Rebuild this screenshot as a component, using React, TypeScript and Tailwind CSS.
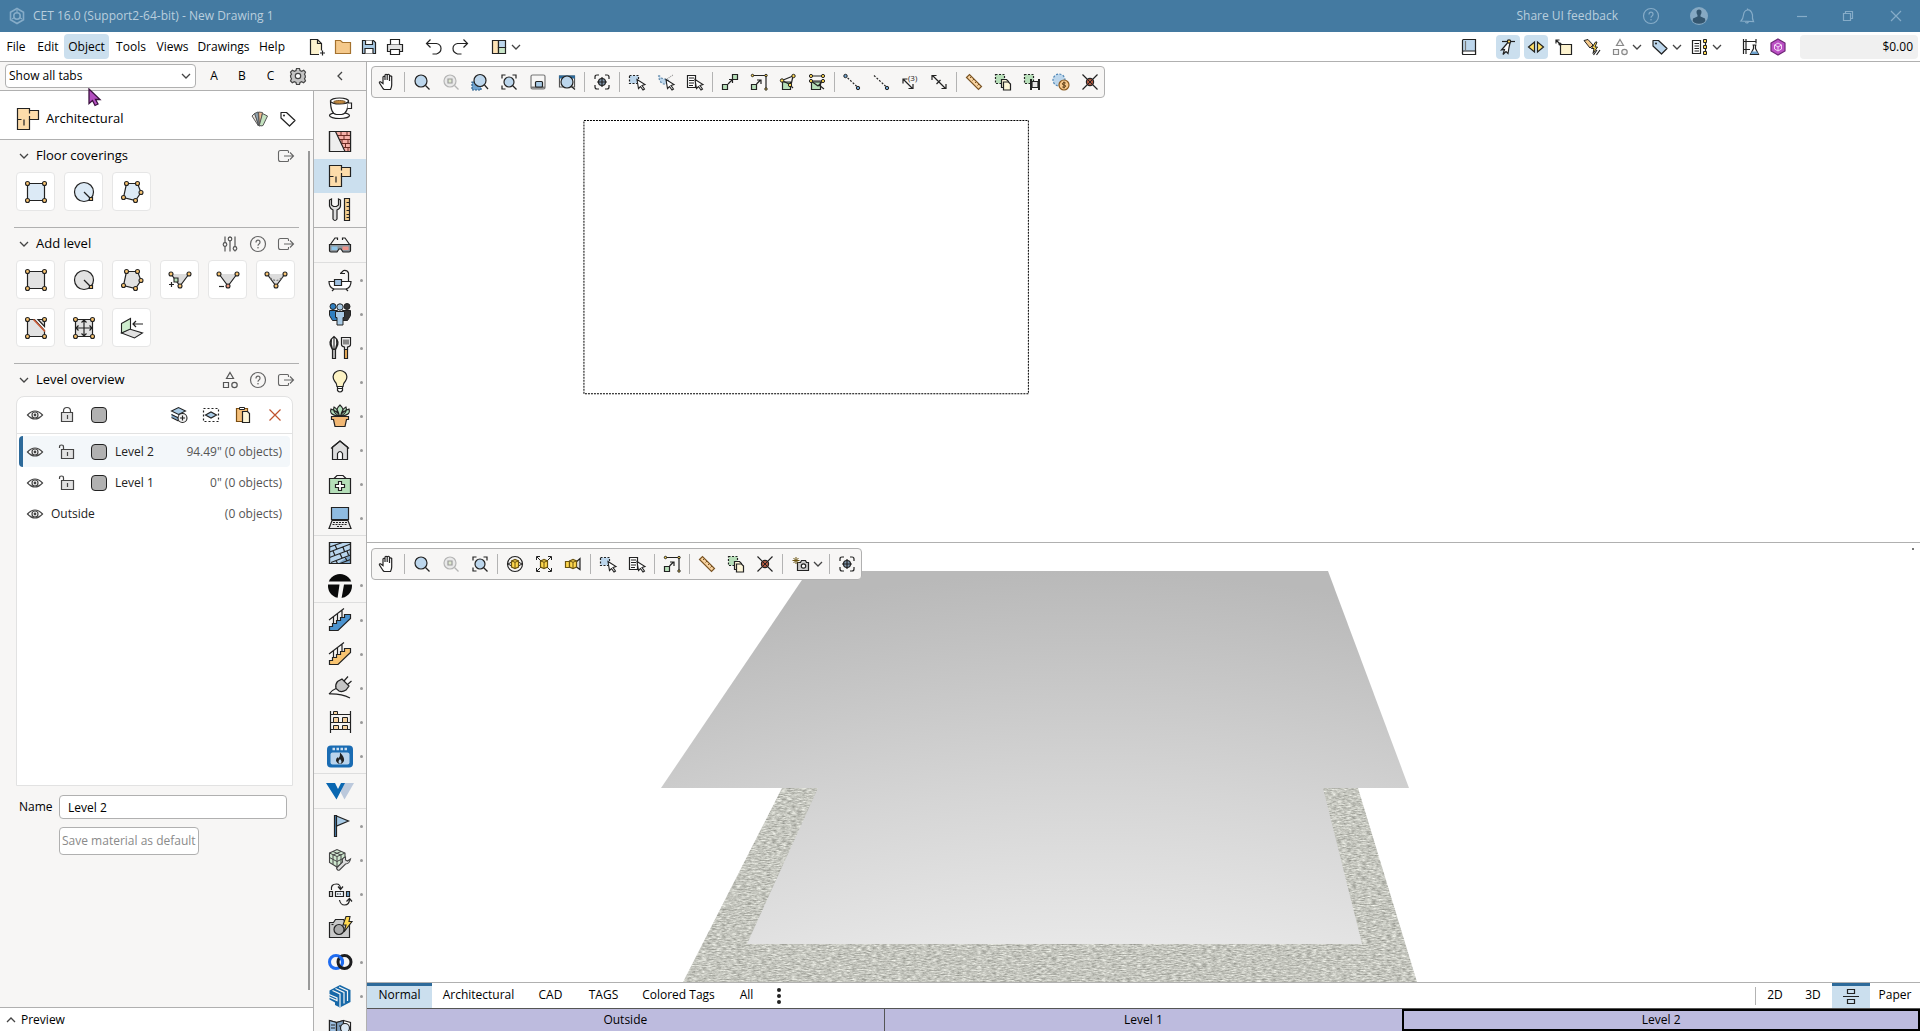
import React from "react";

type Draw = { s?: number; children: React.ReactNode; className?: string };

const Svg = ({ s = 24, children, className = "" }: Draw) => (
  <svg width={s} height={s} viewBox={`0 0 ${s} ${s}`} fill="none" stroke="#222" strokeWidth="1.2" className={`shrink-0 ${className}`} aria-hidden="true">
    {children}
  </svg>
);

const Chevron = ({ d = "down", color = "#444" }: { d?: "down" | "up" | "left"; color?: string }) => (
  <svg width="10" height="10" viewBox="0 0 10 10" fill="none" stroke={color} strokeWidth="1.3" className="shrink-0" aria-hidden="true">
    <path d={d === "down" ? "M1 3l4 4 4-4" : d === "up" ? "M1 7l4-4 4 4" : "M7 1L3 5l4 4"} />
  </svg>
);

/* ---------- small icons, 24 x 24 ---------- */

const NewFile = () => (
  <Svg><path d="M5.5 4.5h7l4 4v11h-11z" fill="#fdf3cf" /><path d="M12.5 4.5v4h4" /><path d="M14 15.500h6v6h-6z" fill="#fff" stroke="none" /><path d="M17.5 15.5v5M15 18h5" /></Svg>
);
const Folder = () => <Svg><path d="M4.5 18.5v-13h5l2 2h8v11z" fill="#f5c98b" stroke="#a5722e" /></Svg>;
const Save = () => (
  <Svg><path d="M5.5 5.5h11l2 2v11h-13z" fill="#a9cbe6" /><path d="M8.5 5.5v4h7v-4M8 18.5v-5h8v5" fill="#fff" /></Svg>
);
const Printer = () => (
  <Svg><path d="M4.5 9.500h15v7h-15z" fill="#e3e3e3" /><path d="M7.5 9.500v-5h9v5M7.5 14.500h9v5h-9z" fill="#fff" /></Svg>
);
const Undo = () => <Svg><path d="M8.5 4.500L4.500 8.500l4 4M4.500 8.500h10q4.500 1 4.500 5t-4.500 5.500h-4" /></Svg>;
const Redo = () => <Svg><path d="M15.5 4.500l4 4-4 4M19.500 8.500h-10q-4.500 1-4.500 5t4.500 5.500h4" /></Svg>;
const LayoutIcon = () => (
  <Svg><path d="M5.5 5.5h6v13h-6z" fill="#fde2b5" /><path d="M11.5 5.5h7v7h-7z" fill="#bcd6ec" /><path d="M11.5 12.5h7v6h-7z" fill="#c9e6c9" /></Svg>
);
const Book = () => (
  <Svg><path d="M5.5 5.500q0-1 1-1h12v15h-12q-1 0-1-1z" fill="#bcd6ec" /><path d="M5.5 17q0-1 1-1h12v3.500h-12q-1 0-1-1z" fill="#fff" /><path d="M8.5 6v10" stroke="#777" /></Svg>
);
const SnapPlane = () => (
  <Svg><path d="M6 6.500h13" /><path d="M11.500 8l-6 7 3-.5-1.500 5 3-3 2 2 1-6 1-4.500" fill="#fff" /><circle cx="13" cy="6.500" r="1.700" fill="#ffd95e" /></Svg>
);
const Mirror = () => (
  <Svg><path d="M10.500 7v10L4.500 12zM13.500 7v10l6-5z" fill="#ffe068" /></Svg>
);
const CornerBox = () => (
  <Svg><path d="M8.500 9.500h11v10h-11z" fill="#fdf3cf" /><path d="M8 9L4 5M4 8.500V5h3.500" /><circle cx="8" cy="9" r="1" fill="#222" /></Svg>
);
const QuickTag = () => (
  <Svg><path d="M4 5.500l4-1 5 5.500-3 3z" fill="#f5c98b" strokeWidth="1" /><path d="M15.500 7l-4 6.500h2.500l-1 5 4.500-6.500H15l2-5z" fill="#ffd84f" strokeWidth="1" /><path d="M17 15l-3.500 5M20 15l-3.500 5" /></Svg>
);
const Shapes = ({ c = "#555" }: { c?: string }) => (
  <Svg><g stroke={c} fill="#f4f4f4"><path d="M12 4.500l3.500 6h-7zM5.500 14.500h5v5h-5z" /><circle cx="16.500" cy="17" r="2.700" /></g></Svg>
);
const Tag = ({ fill = "#bcd6ec" }: { fill?: string }) => (
  <Svg><path d="M5 5.500h5.500l8.500 8-5.500 5.500L5 11z" fill={fill} strokeLinejoin="round" /><circle cx="8" cy="8.500" r="1" fill="#222" stroke="none" /></Svg>
);
const ListTree = () => (
  <Svg><path d="M4.500 5.500h8v13h-8z" fill="#fff" /><path d="M6.500 8.500h4.500M6.500 11h4.500M6.500 13.500h4.500M6.500 16h4.500M17.500 6v13" /><g fill="#ffd84f" strokeWidth="1"><path d="M15.500 4.500h3v3h-3zM15.500 10.500h3v3h-3zM15.500 16.500h3v3h-3z" /></g></Svg>
);
const Lab = () => (
  <Svg><path d="M5.500 4v15M8 6.500h10M8 14.500h4M8 4v15M18 4v4.500M5.500 6.500H8M5.500 14.500H8" /><path d="M14.500 10h4M15.500 10v3.500l-3 6h8l-3-6V10" fill="#fff" /><path d="M14 16.500h5l1.200 2.500h-7.400z" fill="#6fa3cf" stroke="none" /></Svg>
);
const PurpleHex = () => (
  <Svg><path d="M12 4l7 4v8l-7 4-7-4V8z" fill="#bb4fc4" stroke="#6d2676" /><path d="M12 8l3.500 2v4L12 16l-3.500-2v-4zM8.500 10l3.500 2 3.500-2M12 12v4" stroke="#f3d9f6" strokeWidth="1" /></Svg>
);
const Gear = () => (
  <Svg><path d="M10.500 4.500h3l.5 2 1.700.8 2-1 1.800 1.900-1 2 .8 1.600v1.600l-.8 1.400 1 2-1.900 1.900-2-1-1.600.8-.5 2h-3l-.5-2-1.700-.8-2 1-1.800-1.900 1-2-.8-1.600-.2-1.500 1-1.500-1-2 1.900-1.900 2 1 1.600-.8z" fill="#c4c4c4" stroke="#444" /><circle cx="12" cy="12" r="2.700" fill="#fff" stroke="#444" /></Svg>
);
const Palette = () => (
  <Svg>
    <path d="M10.500 19L4 9l3-3z" fill="#e8e2da" stroke="#555" strokeWidth="1" /><path d="M11 19L6.500 6.500l3.500-1.500 1.500 14z" fill="#8fa3b0" stroke="#555" strokeWidth="1" />
    <path d="M11.500 19L10.500 5l4 .5-2.500 13.500z" fill="#f1b98d" stroke="#555" strokeWidth="1" /><path d="M11.500 17.500L14.500 6.500l5 2.500-4.500 9.500q-3 1.500-3.500-1z" fill="#c4e3c0" stroke="#555" strokeWidth="1" />
  </Svg>
);
const Export = () => (
  <Svg><path d="M14.500 9V7.500q0-1-1-1h-7q-2 0-2 2v7q0 2 2 2h7q1 0 1-1V15M10 12h9.500M16 8.500l3.500 3.500-3.500 3.500" stroke="#666" strokeWidth="1.100" /></Svg>
);
const HelpCircle = ({ c = "#666" }: { c?: string }) => (
  <Svg><circle cx="12" cy="12" r="7.500" stroke={c} /><path d="M10 10.500q0-2.300 2-2.300t2 2q0 1.100-1 1.700t-1 1.800" stroke={c} /><circle cx="12" cy="15.800" r=".8" fill={c} stroke="none" /></Svg>
);
const Sliders = () => (
  <Svg><g stroke="#555"><path d="M7 4.500v15M12 4.500v15M17 4.500v15" /><g fill="#f7f6f5"><circle cx="7" cy="12.500" r="1.800" /><circle cx="12" cy="7" r="1.800" /><circle cx="17" cy="16.500" r="1.800" /></g></g></Svg>
);
const Eye = () => (
  <Svg><path d="M4.500 12q7.500-8 15 0-7.500 8-15 0z" fill="#fff" stroke="#444" /><circle cx="12" cy="12" r="3" stroke="#444" /><circle cx="12" cy="12" r="1.400" fill="#444" stroke="none" /></Svg>
);
const Lock = ({ open = false }: { open?: boolean }) => (
  <Svg>
    <path d={open ? "M8.500 9.500V7q0-2-2-2t-2 2v1" : "M8.500 9.500V8q0-3.500 3.500-3.500T15.500 8v1.500"} stroke="#444" />
    <path d={open ? "M6.500 9.500h12v9h-12z" : "M6.500 9.500h11v9h-11z"} fill="#e2e2e2" stroke="#444" /><path d="M12.500 12v4" stroke="#444" />
  </Svg>
);
const Swatch = () => <span className="size-4 shrink-0 rounded-[4px] border border-[#222] bg-[#b1b1b1]" />;
const LayersAdd = () => (
  <Svg><path d="M4.500 8l7-3.500 7 3.500-7 3.500z" fill="#a9cbe6" strokeWidth="1.100" /><path d="M4.500 11l7 3.500v3l-7-3.500z" fill="#7fa8cc" stroke="none" /><path d="M4.500 11.500l7 3.500 4-2M4.500 14.500l7 3.500" strokeWidth="1.100" /><circle cx="15.500" cy="15" r="4.500" fill="#f2f2f2" strokeWidth="1.100" /><path d="M15.500 12.500v5M13 15h5" /></Svg>
);
const IsolateLayer = () => (
  <Svg><path d="M4.500 5.500h15v13h-15z" strokeDasharray="2 2" /><path d="M6.500 12l5.500-3 5.500 3-5.500 3z" fill="#a9cbe6" /></Svg>
);
const Paste = () => (
  <Svg><path d="M5.500 5.500h11v13h-11z" fill="#f5c07a" stroke="#7a4d12" /><path d="M8.500 4.500h5v2h-5z" fill="#fff" strokeWidth="1" /><path d="M11.500 8.500h5l2 2v9h-7z" fill="#fdf6d8" /></Svg>
);
const RedX = () => <Svg><path d="M6.500 6.500l11 11M17.500 6.500l-11 11" stroke="#c0532f" /></Svg>;

const Hand = () => (
  <Svg><path d="M8 18.500L4.500 13q-.5-1.500 1-1.200L8 13.500V7q.8-1.500 2 0v3-5q1-1.500 2.200 0v5V5q1.100-1.500 2.300 0v6-4.500q1.100-1.200 2.200 0V15q0 2-1.200 4.500H9z" fill="#fff" /></Svg>
);
const Lens = () => <Svg><circle cx="11" cy="11" r="6" fill="#bcd6ec" /><path d="M15.500 15.500l4 4" /></Svg>;
const LensDim = () => (
  <Svg><g stroke="#b5b5b5"><circle cx="11" cy="11" r="6" fill="#e9e9e9" /><path d="M15.500 15.500l4 4" /><path d="M9 9h4v4H9z" fill="#dfe9cf" stroke="#9c9c9c" /></g></Svg>
);
const LensWindow = () => (
  <Svg><path d="M4 12h9v8H4z" fill="#6fa3cf" stroke="#2d5f8a" strokeDasharray="2 1" /><circle cx="12" cy="10.500" r="6" fill="#bcd6ec" /><path d="M16.500 15l3.500 4" /></Svg>
);
const LensExtents = () => (
  <Svg><path d="M5 8.500V5h3.500M15.500 5H19v3.500M5 15.500V19h3.500" /><circle cx="12" cy="12" r="5" fill="#bcd6ec" /><path d="M15.500 15.500l4 4" /></Svg>
);
const MiniWindow = () => (
  <Svg><rect x="5" y="5" width="14" height="14" rx="1.500" stroke="#777" /><path d="M5 17.500h14" stroke="#777" strokeWidth="2" /><rect x="9.500" y="11.500" width="7" height="5.500" rx="1" fill="#a9cbe6" /></Svg>
);
const LensScreen = () => (
  <Svg><path d="M4.500 6h15v11h-15z" fill="#fff" stroke="#555" /><path d="M4 5.500h16v3H4z" fill="#2d6a9a" stroke="none" /><circle cx="12" cy="12" r="6" fill="#bcd6ec" /><path d="M16.500 16.500l3.500 3" /></Svg>
);
const Target = () => (
  <Svg><path d="M5 9V7q0-2 2-2h2M15 5h2q2 0 2 2v2M19 15v2q0 2-2 2h-2M9 19H7q-2 0-2-2v-2" /><circle cx="12" cy="12" r="3.500" fill="#7f96ad" /><path d="M12 7v10M7 12h10" /></Svg>
);
const Pointer = () => <path d="M12 9.500l8 5-3 1 2.500 3.500-1.500 1-2.500-3.500-2 2z" fill="#fff" strokeWidth="1.100" />;
const SelectRect = () => <Svg><path d="M4.500 5.500h9v8h-9z" fill="#bcd6ec" strokeDasharray="2 1.500" /><Pointer /></Svg>;
const SelectLasso = () => <Svg><path d="M4.500 6q1-1 2.500 2l7 2q2 3-2 4-6 1-7.500-8z" fill="#bcd6ec" stroke="#5f87a8" strokeDasharray="2 1.500" /><path d="M13 9l6-4" stroke="#999" strokeDasharray="1 1" /><Pointer /></Svg>;
const SelectList = () => <Svg><path d="M4.500 5.500h8v12h-8z" fill="#fff" /><path d="M6 8h5M6 10.500h5M6 13h5M6 15.500h4" /><Pointer /></Svg>;
const LinkSquares = () => (
  <Svg><g fill="#b7dfb9"><path d="M14.500 4.500h5v5h-5zM4.500 14.500h5v5h-5z" /></g><path d="M10 14l4.500-4.500M11 9.500h3.500V13" /></Svg>
);
const ScaleBox = () => (
  <Svg><path d="M4.500 14.500h5v5h-5z" fill="#b7dfb9" /><path d="M6 5.500h13v13M9.500 14l4-4M10 10h4v4" /><g fill="#ffd84f" strokeWidth="1"><circle cx="5.500" cy="5.500" r="1.200" /><circle cx="19" cy="5.500" r="1.200" /><circle cx="19" cy="19" r="1.200" /></g></Svg>
);
const VertexA = () => (
  <Svg><path d="M6.500 12h8v7.500h-8z" fill="#b7dfb9" /><path d="M6 10.500l11-4.500M6 10.500l8 4M17 6l-2 9M17 18l-3-3" /><g fill="#ffd84f" strokeWidth="1"><circle cx="6" cy="10.500" r="1.700" /><circle cx="17.500" cy="6" r="1.700" /><circle cx="14" cy="15" r="1.700" /></g></Svg>
);
const VertexB = () => (
  <Svg><path d="M6.500 12h9v7.500h-9z" fill="#b7dfb9" /><path d="M6 6h12M6 11h12M6 11l7 5 5-5M14 15l5 4" /><g fill="#ffd84f" strokeWidth="1"><circle cx="6" cy="6" r="1.600" /><circle cx="18" cy="6" r="1.600" /><circle cx="6" cy="11" r="1.600" /><circle cx="18" cy="11" r="1.600" /></g></Svg>
);
const DotLine = ({ both = false }: { both?: boolean }) => (
  <Svg><path d="M5 5.500l13 12" strokeDasharray="2 1.500" /><g fill="#6fa3cf" strokeWidth="1">{both && <circle cx="5.500" cy="6" r="1.700" />}<circle cx="18" cy="18" r="1.700" /></g></Svg>
);
const DimensionN = () => (
  <Svg><path d="M5.500 9.500l9 9M5 13.500V9h4.500M15 14v4.500h-4.500" /><text x="10" y="11" fontSize="8" fill="#222" stroke="none" fontFamily="Open Sans, sans-serif">(3)</text></Svg>
);
const Dimension = () => <Svg><path d="M5.500 5.500l13 13M5 10V5.500h4.500M19 14v4.500h-4.500M13.500 10l-4 4" /></Svg>;
const Ruler = () => (
  <Svg><path d="M4.500 7.500l3-3 12 12-3 3z" fill="#f8d3a0" stroke="#7a5424" /><path d="M9.500 6.500L8 8M12 9l-1.500 1.500M14.500 11.500L13 13M17 14l-1.500 1.500" stroke="#7a5424" strokeWidth="1" /></Svg>
);
const CopyBox = () => (
  <Svg><path d="M4.500 4.500h9v9h-9z" fill="#b7dfb9" strokeDasharray="2 1.500" /><path d="M10.500 9.500h5l2 2v6h-7z" fill="#fdf6d8" /><path d="M12.500 12h5l2 2v6h-7z" fill="#fdf6d8" /></Svg>
);
const FilmBox = () => (
  <Svg><path d="M4.500 4.500h9v9h-9z" fill="#b7dfb9" strokeDasharray="2 1.500" /><path d="M11 9v11M19 9v11" strokeWidth="2" /><path d="M12 11.500h6v6h-6z" fill="#e5e5e5" /></Svg>
);
const CostIcon = () => (
  <Svg><circle cx="10" cy="10" r="6" fill="#bcd6ec" stroke="#4f86b5" strokeDasharray="2 1.500" /><circle cx="15" cy="15" r="5" fill="#f8c98c" stroke="#8a5a1f" /><path d="M16.700 13q-3.400-1-3.400.8 0 1 1.700 1.200t1.700 1.200q0 1.700-3.400.8M15 11.500v7" stroke="#5a3a12" strokeWidth="1" /></Svg>
);
const Explode = () => (
  <Svg><path d="M4.500 4.500l15 15M19.500 4.500l-15 15" /><circle cx="12" cy="12" r="3.600" fill="#b0573f" /><path d="M9.500 9.500l5 5M14.500 9.500l-5 5" strokeWidth="1" /></Svg>
);
const Cube = () => (
  <><path d="M8.500 9l3.500-1.500L15.500 9v6L12 16.500 8.500 15z" fill="#ffd84f" stroke="#6b5410" /><path d="M12 10v6.500M8.500 9l3.500 1.200L15.500 9" stroke="#6b5410" strokeWidth="1" /></>
);
const OrbitCube = () => <Svg><circle cx="12" cy="12" r="7.500" fill="#f7f6f5" /><path d="M5 12q7-5 14 0M5 12q7 5 14 0" strokeWidth="1" /><Cube /></Svg>;
const ExpandCube = () => <Svg><path d="M5 5l14 14M19 5L5 19M4.500 8V4.500H8M16 4.500h3.500V8M4.500 16v3.500H8M16 19.500h3.500V16" strokeWidth="1" /><Cube /></Svg>;
const CameraCube = () => <Svg><path d="M14 11l5-4.500v11L14 14" fill="#ddd" /><path d="M4.500 9.500h4v6h-4z" fill="#ffd84f" stroke="#6b5410" /><Cube /></Svg>;
const CameraFx = () => (
  <Svg><path d="M8.500 10.500h3l1-2h4l1 2h2v8h-11z" fill="#ccc" /><circle cx="14.500" cy="14" r="2.200" fill="#fff" /><path d="M7 5v7M3.500 8.500h7M4.500 6l5 5M9.500 6l-5 5" strokeWidth="1" stroke="#6b5410" /></Svg>
);
const SplitView = () => <Svg><path d="M4 12.500h16M8.500 5.500h7v4h-7zM8.500 15.500h7v4h-7z" /></Svg>;

/* ---------- 28 x 28 drawings: tiles and the rail ---------- */

const Node = ({ x, y, c = "#f8c471" }: { x: number; y: number; c?: string }) => <circle cx={x} cy={y} r="2" fill={c} strokeWidth="1.1" />;
const Corners = () => <><Node x={5.5} y={5.5} /><Node x={22.5} y={5.5} /><Node x={5.5} y={22.5} /><Node x={22.5} y={22.5} /></>;
const TileRect = ({ f = "#e2e2e2" }: { f?: string }) => (
  <Svg s={28}><path d="M5.500 5.500h17v17h-17z" fill={f} /><Corners /></Svg>
);
const TileCircle = ({ f = "#e2e2e2" }: { f?: string }) => (
  <Svg s={28}><circle cx="14" cy="14" r="9.500" fill={f} /><path d="M14 14l6 6" /><path d="M19.500 19.500h3v3h-3z" fill="#f8c471" /></Svg>
);
const TilePoly = ({ f = "#e2e2e2" }: { f?: string }) => (
  <Svg s={28}><path d="M8.500 5.500h11l3.500 9-5.500 8-12-3z" fill={f} /><Node x={8.5} y={5.5} /><Node x={19.5} y={5.5} /><Node x={23} y={14.5} /><Node x={17.5} y={22.5} /><Node x={5.5} y={19.5} /></Svg>
);
const TileV = ({ kind }: { kind: "add" | "remove" | "arc" }) => (
  <Svg s={28}>
    <path d="M5 8h18l-9 12z" fill="#dcdcdc" stroke="none" /><path d="M5 8l9 12 9-12" />
    {kind === "arc" && <path d="M6 9q8 11 16 0" stroke="#777" strokeDasharray="2 1.5" />}
    <Node x={5} y={8} /><Node x={23} y={8} /><Node x={14} y={20} c={kind === "remove" ? "#ef9a80" : undefined} />
    {kind === "add" && <><path d="M8 12h4v4H8z" fill="#b7dfb9" strokeWidth="1.1" /><path d="M5.500 16v5M3 18.500h5" /></>}
    {kind === "remove" && <path d="M5 20.500h5" />}
  </Svg>
);
const TileCut = () => (
  <Svg s={28}><path d="M5.500 5.500h7l10 11v6h-17z" fill="#e2e2e2" /><path d="M16 5.500h6.500v7z" fill="#ddd" /><path d="M11.500 5.500l11.500 12" stroke="#cc5b36" strokeWidth="1.6" /><Corners /></Svg>
);
const TileMove = () => (
  <Svg s={28}><path d="M5.500 5.500h17v17h-17z" fill="#e2e2e2" /><path d="M14 6v16M6 14h16M11.500 8.500L14 6l2.500 2.500M11.500 19.500L14 22l2.500-2.500M8.500 11.500L6 14l2.500 2.500M19.500 11.500L22 14l-2.500 2.500" /><Corners /></Svg>
);
const TileFold = () => (
  <Svg s={28}><path d="M3.500 19l8-4 13 4-8 5z" fill="#e2e2e2" strokeWidth="1.1" /><path d="M3.500 9.500l9-5v10.500l-9 4z" fill="#cdeccd" strokeWidth="1.1" /><path d="M15 10h10M18 7l-3 3 3 3" /></Svg>
);

const Coffee = () => (
  <Svg s={28}><ellipse cx="13.500" cy="21.500" rx="10" ry="3" fill="#fff" /><path d="M4.500 7q0 13 6 13.500h5Q22 20 22.500 7z" fill="#fff" /><path d="M22 9h3.500v5.500h-4" fill="#fff" /><ellipse cx="13.500" cy="7" rx="9" ry="3" fill="#fff" /><ellipse cx="13.500" cy="8" rx="6" ry="1.500" fill="#c58a3c" stroke="#7b5a30" strokeWidth="1" /></Svg>
);
const BrickWall = () => (
  <Svg s={28}><path d="M3.500 3.500h21v20h-21z" fill="#eee" /><path d="M9.500 3.500h15v20h-5.500z" fill="#f5b0a8" stroke="none" /><path d="M12 7.500h12.500M13.500 11.500h11M15.500 15.500h9M17.500 19.500h7M15 3.500v4M21 3.500v4M18 7.500v4M16 11.500v4M22 11.500v4M19.500 15.500v4M22 19.500v4" stroke="#6b2a22" strokeWidth="1" /><path d="M9.500 3.500l9.500 20M3.500 3.500h21v20h-21z" /></Svg>
);
const FloorPlan = () => (
  <Svg s={28}><path d="M3.500 3.500h12v2h9v9h-9v10h-12z" fill="#fddcaa" /><path d="M15.500 5.500v3M15.500 11v4M3.500 14.500h4M10 14.500v6" /></Svg>
);
const ToolsIcon = () => (
  <Svg s={28}><path d="M3.500 4v6q1 3 3.500 4v9q2 3 4 0v-9q3-1 3.500-4V4l-2-1v6l-2 1.500h-3L5.500 9V3z" fill="#ddd" /><path d="M18.500 2.500h5v22h-5z" fill="#f5cf8e" /><path d="M20.500 6.500h3M20.500 10.500h3M20.500 14.500h3M20.500 18.500h3M20.500 21.500h3" strokeWidth="1" /></Svg>
);
const Glasses = () => (
  <Svg s={28}><path d="M4 14l5-7h2.500v2M24 14l-5-7h-2.500v2" /><path d="M3.500 13.500h21v6q0 1.500-1.500 1.500h-6l-2-3h-2l-2 3H5q-1.500 0-1.500-1.500z" fill="#8e979e" /><path d="M5.500 15.500h6v3.500h-6z" fill="#8ec6ea" stroke="none" /><path d="M16.500 15.500h6v3.500h-6z" fill="#f0938a" stroke="none" /></Svg>
);
const Bath = () => (
  <Svg s={28}><path d="M3 15.500h22q0 6-5 7.500H8q-5-1.500-5-7.500z" fill="#fff" /><path d="M22.500 15V7q-1-3-5-2.500l-3 3M14 7.500h5M8 23l-2 2M20 23l2 2" /><path d="M8.500 13.500h7v6h-7z" fill="#9dbfe0" /></Svg>
);
const People = () => (
  <Svg s={28}><g strokeWidth="1"><circle cx="7" cy="6.500" r="3" fill="#2f7fc0" /><path d="M3.500 10.500h8v10h-5l-3-5z" fill="#2f7fc0" /><circle cx="21" cy="6.500" r="3" fill="#333" /><path d="M16.500 10.500h8v5l-3 5h-5z" fill="#333" /><circle cx="14" cy="7" r="3.200" fill="#a9cbe6" /><path d="M9.500 11.500h9v6h-1.500v7.500h-6v-7.500H9.500z" fill="#a9cbe6" /></g></Svg>
);
const Kitchen = () => (
  <Svg s={28}><path d="M8 2.500q-7 5-2 12.500h4q5-7.500-2-12.500zM8 3v12M5.500 5q-1 5 1 10M10.500 5q1 5-1 10" strokeWidth="1.1" /><path d="M6.500 15.500h3v9h-3z" fill="#bbb" /><path d="M15.500 3.500h9v7q0 2-3 2.500v2.500h-3V13q-3-.5-3-2.500z" fill="#eee" /><path d="M18 5.500v5M20 5.500v5M22 5.500v5" strokeWidth="1" /><path d="M18.500 15.500h3v9h-3z" fill="#f5b45c" /></Svg>
);
const Bulb = () => (
  <Svg s={28}><path d="M11 18.500q0-3-2.500-5.500-3-5 .5-8.500 5-4 10 0 3.500 3.500.5 8.500-2.500 2.500-2.500 5.500z" fill="#fdf3c4" /><path d="M11.500 18.500h5v4q-2.500 3-5 0zM11.500 20.500h5" fill="#fff" /></Svg>
);
const Plant = () => (
  <Svg s={28}><g fill="#b5e0bd" strokeWidth="1.1"><path d="M12 14Q3 13 5 7q6 2 9 7zM16 14q9-1 7-7-6 2-9 7zM14 14Q8 8 14 3q6 5 0 11zM13 14q-7-4-5-9 5 3 5 9zM15 14q7-4 5-9-5 3-5 9z" /></g><path d="M5.500 14.500h17v3h-2l-1.500 7h-10l-1.500-7h-2z" fill="#f2b874" /></Svg>
);
const House = () => <Svg s={28}><path d="M6.500 11v12.500h15V11L14 5z" fill="#ddd" /><path d="M5 12.500l9-7.500 9 7.500" /><path d="M11.500 23.500v-6q2.500-4 5 0v6z" fill="#fff" /></Svg>;
const MedKit = () => (
  <Svg s={28}><path d="M8 8.500l3-3h6l3 3" /><path d="M3.500 8.500h21v15h-21z" fill="#b5dfb9" /><path d="M12.500 11.500h3v3h3v3h-3v3h-3v-3h-3v-3h3z" fill="#fff" /></Svg>
);
const Laptop = () => (
  <Svg s={28}><path d="M5.500 3.500h17v12h-17z" fill="#8fbbe0" /><path d="M6 16.500h16l3 8H3z" fill="#e8e8e8" /><path d="M7 18.500h14M6.500 20.500h15M11 22.500h6" strokeDasharray="2 1" /></Svg>
);
const BlueBrick = () => (
  <Svg s={28}><path d="M3.500 3.500h21v21h-21z" fill="#b9d6ee" /><path d="M12 24.500l12.500-9v9z" fill="#7fa8cc" stroke="none" /><path d="M3.500 8l13-4.500M3.500 13L24.500 5M3.500 18.500l21-8M5 23.500l19.500-7.500M14 24.500l10.500-4M9 6l2 4.500M17 8l1.500 4.500M7 12l2 4.500M14 14.500l2 4.500M21 12l1.500 4M10 21.500l1.500 3M19 18l2 4" /><path d="M3.500 3.500h21v21h-21z" /></Svg>
);
const TLogo = () => (
  <Svg s={28}><circle cx="14" cy="14" r="12" fill="#0a0a0a" stroke="none" /><path d="M1 9.500h26v3H18l-2.500 14h-4l2-14H1z" fill="#f7f6f5" stroke="none" /></Svg>
);
const Stairs = ({ f }: { f: string }) => (
  <Svg s={28}><path d="M3.500 24.500v-4h3v-3h4v-3h4v-3h4v-3h6v4L12 24.500z" fill={f} /><path d="M3 14L18 2.500M7.500 11v7M11.500 8v6.500M16 4.500v7" /></Svg>
);
const Plug = () => (
  <Svg s={28}><path d="M3 20q3-4 7-5.500M3 20q12-.5 21 4" /><path d="M10 14.500q-1-4 1.500-7L16 5l7 7-3 4q-4 2.500-7 1z" fill="#c4c4c4" /><path d="M18 7l4-4.500M21.500 10.500L25.500 7" /></Svg>
);
const Shelf = () => (
  <Svg s={28}><path d="M4.500 3v22M24.500 3v22M4.500 6.500h20M4.500 14.500h20M4.500 21.500h20" /><g fill="#f8d3a0" strokeWidth="1"><path d="M7.500 3.500h4v3h-4zM7.500 9.500h5v5h-5zM16.500 9.500h5v5h-5zM7.500 17.500h5v4h-5zM16.500 17.500h5v4h-5z" /></g></Svg>
);
const Oven = () => (
  <Svg s={28}><rect x="1" y="3.500" width="26" height="22" rx="4" fill="#1a6cb3" stroke="none" /><path d="M6.500 7h15" stroke="#cfe0f0" strokeWidth="2.400" strokeDasharray="2.500 1.500" /><rect x="4.500" y="10.500" width="19" height="12" rx="2" fill="#b9d3ec" stroke="none" /><path d="M14 10.500q5 5 4 8.500-1.500 3-4 3t-4-3q-.5-2.500 2-4l.5 1.500q2-3 1.500-6z" fill="#222" stroke="none" /><path d="M14 17q3 3 0 5-3-2 0-5z" fill="#b9d3ec" stroke="none" /></Svg>
);
const VLogo = () => (
  <Svg s={28}><path d="M16 6h12L18.500 22.500 15 16z" fill="#bcc9dc" stroke="none" /><path d="M0 6h9l3 6 3-6h4l-8.500 16.500z" fill="#0a67b1" stroke="none" /></Svg>
);
const Flag = () => <Svg s={28}><path d="M8.500 3.500h2v21h-2z" fill="#4a89bd" /><path d="M10.500 4l12 5-12 5z" fill="#a9cbe6" /></Svg>;
const CubeTool = () => (
  <Svg s={28}><path d="M3.500 7L11 3.500 19 7v9l-8 5-7.500-4.500z" fill="#cfe8cf" stroke="#444" strokeWidth="1.1" /><path d="M3.500 7L11 10.500 19 7M11 10.500V21M3.500 11.500l7.500 4 8-4M7 5.500l8 3.500v9.500M15 5.500L7 9v9.500" stroke="#444" strokeWidth="1" /><path d="M24.500 13l-3 2-2-1v-3q-4 1-3 5l-6 6q1 3 3 2l6-6q4 0 5-5z" fill="#ddd" stroke="#444" strokeWidth="1.1" /></Svg>
);
const Flow = () => (
  <Svg s={28}><path d="M5.500 10q-1-6 5-6 4 0 4 5M12 6.500l2.500 3 2.500-3M13.500 20q1 5 5 5 5 0 5-6M20.500 21.500l3-3 2.500 3" /><path d="M3.500 11.500h3v5h-3z" fill="#ddd" /><path d="M20.500 11.500h3v5h-3z" fill="#6fa3cf" /><path d="M9.500 11.500h8v5h-8z" fill="#eef4fb" /><path d="M11 14h5" strokeDasharray="1.500 1" /></Svg>
);
const CameraFlash = () => (
  <Svg s={28}><path d="M3.500 8.500h4l2-3h8l2 3h4v15h-20z" fill="#c9c9c9" /><circle cx="13" cy="15.500" r="5" fill="#aaa" /><path d="M5.500 10.500h2" /><path d="M20 2.500h4l-1 5h3L18 18l2-7h-3z" fill="#ffd84f" strokeWidth="1.1" /></Svg>
);
const Rings = () => (
  <Svg s={28}><circle cx="10" cy="14" r="6.500" stroke="#1f6cf0" strokeWidth="3" /><circle cx="18.500" cy="14" r="6.500" stroke="#1d1d1f" strokeWidth="3" /><path d="M13 8.200q4.500 3 3.300 7.800" stroke="#1f6cf0" strokeWidth="3" /></Svg>
);
const SketchLogo = () => (
  <Svg s={28}><path d="M14 3l10.500 5v12L14 25.500 9 23v-2.500l-5.500-3V8.500z" fill="#1668a8" stroke="none" /><path d="M3 12.500l8 3.500v2.500l-8-3.500M6.500 8.500L14 12v13M9.500 6.500l8.500 4v11M13 5l8.500 4v10" stroke="#f7f6f5" strokeWidth="1.200" /></Svg>
);
const MapLens = () => (
  <Svg s={28}><path d="M3.500 4.500l7 2 7-2 7 2v18h-21z" fill="#fff" /><path d="M3.500 4.500l7 2v18h-7z" fill="#9dbfe0" /><path d="M10.500 6.500l7-2v20h-7zM5 9h4M5 12h4M13 10h3" fill="#7d9dbd" /><circle cx="19" cy="12" r="4.500" fill="#dceaf6" /></Svg>
);

/* ---------- shared controls ---------- */

type Named = [string, React.ReactNode];

const IconButton = ({ label, children, className = "size-6" }: { label: string; children: React.ReactNode; className?: string }) => (
  <button type="button" aria-label={label} className={`flex shrink-0 items-center justify-center ${className}`}>{children}</button>
);
const VLine = ({ className = "h-[18px]" }: { className?: string }) => <span className={`w-px shrink-0 bg-[#b3b3b3] ${className}`} />;

const Toolbar = ({ groups, label, className }: { groups: Named[][]; label: string; className: string }) => (
  <div role="toolbar" aria-label={label} className={`absolute left-1 flex h-8 items-center rounded border border-[#b0b0b0] bg-[#f7f6f5] ${className}`}>
    {groups.map((g, i) => (
      <React.Fragment key={i}>
        {i > 0 && <span className="flex w-[6px] justify-center"><VLine className="h-5" /></span>}
        {g.map(([name, icon]) => (
          <IconButton key={name} label={name} className={name === "Camera effects" ? "h-[29px] w-[41px]" : "size-[29px]"}>
            {icon}{name === "Camera effects" && <Chevron />}
          </IconButton>
        ))}
      </React.Fragment>
    ))}
  </div>
);

const tools2d: Named[][] = [
  [["Pan", <Hand />]],
  [["Zoom", <Lens />], ["Zoom selection", <LensDim />], ["Zoom window", <LensWindow />], ["Zoom extents", <LensExtents />], ["Mini view", <MiniWindow />], ["Zoom screen", <LensScreen />]],
  [["Center view", <Target />]],
  [["Select", <SelectRect />], ["Lasso", <SelectLasso />], ["Select from list", <SelectList />]],
  [["Snap objects", <LinkSquares />], ["Scale", <ScaleBox />], ["Edit vertex", <VertexA />], ["Edit edges", <VertexB />]],
  [["Guide line", <DotLine both />], ["Guide ray", <DotLine />], ["Multiple dimension", <DimensionN />], ["Dimension", <Dimension />]],
  [["Measure", <Ruler />], ["Copy", <CopyBox />], ["Stretch", <FilmBox />], ["Cost", <CostIcon />], ["Explode", <Explode />]],
];
const tools3d: Named[][] = [
  [["Pan", <Hand />]],
  [["Zoom", <Lens />], ["Zoom selection", <LensDim />], ["Zoom extents", <LensExtents />]],
  [["Orbit", <OrbitCube />], ["Fit", <ExpandCube />], ["Camera", <CameraCube />]],
  [["Select", <SelectRect />], ["Select from list", <SelectList />]],
  [["Scale", <ScaleBox />]],
  [["Measure", <Ruler />], ["Copy", <CopyBox />], ["Explode", <Explode />]],
  [["Camera effects", <CameraFx />]],
  [["Center view", <Target />]],
];

type RailItem = { name: string; icon: React.ReactNode; dot?: boolean; active?: boolean };
const rail: RailItem[][] = [
  [{ name: "Home", icon: <Coffee /> }, { name: "Walls", icon: <BrickWall /> }, { name: "Architectural", icon: <FloorPlan />, active: true }, { name: "Tools", icon: <ToolsIcon /> }],
  [{ name: "3D view", icon: <Glasses /> }],
  [
    { name: "Bathroom", icon: <Bath />, dot: true }, { name: "People", icon: <People />, dot: true }, { name: "Kitchen", icon: <Kitchen />, dot: true }, { name: "Lighting", icon: <Bulb />, dot: true },
    { name: "Plants", icon: <Plant />, dot: true }, { name: "Residential", icon: <House />, dot: true }, { name: "Healthcare", icon: <MedKit />, dot: true }, { name: "Technology", icon: <Laptop />, dot: true },
  ],
  [{ name: "Materials", icon: <BlueBrick /> }, { name: "Teknion", icon: <TLogo />, dot: true }],
  [
    { name: "Blue stairs", icon: <Stairs f="#4b93cf" />, dot: true }, { name: "Stairs", icon: <Stairs f="#f8c471" />, dot: true }, { name: "Electrical", icon: <Plug />, dot: true },
    { name: "Storage", icon: <Shelf />, dot: true }, { name: "Appliances", icon: <Oven />, dot: true },
  ],
  [{ name: "Vendor", icon: <VLogo /> }],
  [
    { name: "Flags", icon: <Flag />, dot: true }, { name: "Cube tools", icon: <CubeTool />, dot: true }, { name: "Workflow", icon: <Flow />, dot: true }, { name: "Photo", icon: <CameraFlash /> },
    { name: "Links", icon: <Rings />, dot: true }, { name: "Sketch", icon: <SketchLogo />, dot: true }, { name: "Maps", icon: <MapLens /> },
  ],
];

const TitleBar = () => (
  <header className="flex h-8 shrink-0 items-center bg-[#447aa1] pl-[5px] text-xs text-[#b9cedd]">
    <Svg className="mr-1"><g stroke="#86acc8"><path d="M12 4.500l6.500 3.700v7.600L12 19.500l-6.500-3.700V8.200z" strokeWidth="1.600" /><circle cx="12" cy="12" r="3.200" strokeWidth="1.600" /><path d="M12 9V6M9.500 13.500L7 15M14.500 13.500L17 15" /></g></Svg>
    <h1>CET 16.0 (Support2-64-bit) - New Drawing 1</h1>
    <div className="ml-auto flex items-center">
      <button type="button" className="mr-[21px]">Share UI feedback</button>
      <IconButton label="Help" className="w-6"><HelpCircle c="#86acc8" /></IconButton>
      <IconButton label="Account" className="w-[72px]">
        <Svg><circle cx="12" cy="12" r="9" fill="#86a9c3" stroke="none" /><path d="M9.500 8q0-2.500 2.500-2.500T14.500 8q0 2-1 3v1.500l4.500 2q1 2-1 4-5 2.500-10 0-2-2-1-4l4.500-2V11q-1-1-1-3z" fill="#34566f" stroke="none" /></Svg>
      </IconButton>
      <IconButton label="Notifications" className="w-6"><Svg><path d="M6 17q2-2 2.500-6 .5-4.500 4-5t5 5q-.5 4 1 6.500zM10.500 18q1 2 3 0M12.500 6V4.500" stroke="#86acc8" /></Svg></IconButton>
      <IconButton label="Minimize" className="ml-5 w-[46px]"><Svg><path d="M7 12.500h10" stroke="#86acc8" /></Svg></IconButton>
      <IconButton label="Restore" className="w-[46px]"><Svg><path d="M7.500 9.500h7v7h-7zM9.500 9V7.500h7v7H15" stroke="#86acc8" /></Svg></IconButton>
      <IconButton label="Close" className="w-[49px]"><Svg><path d="M7 7l10 10M17 7L7 17" stroke="#86acc8" /></Svg></IconButton>
    </div>
  </header>
);

const menus: Named[] = [["File", "w-[32px]"], ["Edit", "w-[32px]"], ["Object", "w-[45px] bg-[#cbdfee]"], ["Tools", "w-[44px]"], ["Views", "w-[39px]"], ["Drawings", "w-[63px]"], ["Help", "w-[34px]"]];

const MenuBar = () => (
  <nav aria-label="Main menu" className="flex h-[30px] shrink-0 items-center border-b border-[#b0b0b0] bg-white text-xs">
    {menus.map(([m, w]) => <button type="button" key={m} className={`h-[25px] shrink-0 rounded text-center ${w}`}>{m}</button>)}
    <VLine className="ml-2 mr-[7px]" />
    <div className="flex gap-[2px]">
      <IconButton label="New"><NewFile /></IconButton>
      <IconButton label="Open"><Folder /></IconButton>
      <IconButton label="Save"><Save /></IconButton>
      <IconButton label="Print"><Printer /></IconButton>
    </div>
    <VLine className="mx-[7px]" />
    <div className="flex gap-[2px]">
      <IconButton label="Undo"><Undo /></IconButton>
      <IconButton label="Redo"><Redo /></IconButton>
    </div>
    <VLine className="mx-[7px]" />
    <IconButton label="Layout" className="h-6"><LayoutIcon /><Chevron /></IconButton>
    <div className="ml-auto flex items-center pr-[2px]">
      <IconButton label="Catalogue"><Book /></IconButton>
      <VLine className="mx-[7px]" />
      <div className="flex gap-1">
        <IconButton label="Snapping" className="size-6 rounded bg-[#cbdfee]"><SnapPlane /></IconButton>
        <IconButton label="Mirror" className="size-6 rounded bg-[#cbdfee]"><Mirror /></IconButton>
        <IconButton label="Corner"><CornerBox /></IconButton>
        <IconButton label="Quick tag"><QuickTag /></IconButton>
      </div>
      <div className="ml-1 flex gap-[6px]">
        <IconButton label="Shapes" className="h-6"><Shapes c="#888" /><Chevron /></IconButton>
        <IconButton label="Tags" className="h-6"><Tag /><Chevron /></IconButton>
        <IconButton label="List" className="h-6"><ListTree /><Chevron /></IconButton>
      </div>
      <VLine className="ml-[9px] mr-[6px]" />
      <div className="flex gap-1">
        <IconButton label="Lab"><Lab /></IconButton>
        <IconButton label="Extensions"><PurpleHex /></IconButton>
      </div>
      <output className="ml-[10px] flex h-6 w-[118px] items-center justify-end rounded bg-[#f0f0f0] pr-[5px]">$0.00</output>
    </div>
  </nav>
);

const Section = ({ title, icons, children }: { title: string; icons: Named[]; children: React.ReactNode }) => (
  <section>
    <div className="flex h-8 items-center">
      <button type="button" className="flex items-center gap-[7px] pl-[5px] text-[13px] font-medium"><Chevron />{title}</button>
      <div className="ml-auto mr-px flex gap-1">{icons.map(([n, i]) => <IconButton key={n} label={n}>{i}</IconButton>)}</div>
    </div>
    {children}
  </section>
);

const Tiles = ({ items }: { items: Named[] }) => (
  <div className="flex flex-wrap gap-[9px] pl-[2px]">
    {items.map(([n, i]) => <IconButton key={n} label={n} className="size-[39px] rounded border border-[#e6e6e6] bg-white">{i}</IconButton>)}
  </div>
);

const LevelRow = ({ name, info, active = false, outside = false }: { name: string; info: string; active?: boolean; outside?: boolean }) => (
  <li className={`flex h-[31px] items-center rounded border-l-4 pr-2 ${active ? "border-[#2d6a9a] bg-[#f3f7fa]" : "border-transparent"}`}>
    <IconButton label={`Show ${name}`}><Eye /></IconButton>
    {!outside && (
      <>
        <IconButton label={`Lock ${name}`} className="ml-2 size-6"><Lock open /></IconButton>
        <IconButton label={`Colour of ${name}`} className="ml-2 size-6"><Swatch /></IconButton>
      </>
    )}
    <span className="ml-1 text-[#222]">{name}</span>
    <span className="ml-auto text-[#555]">{info}</span>
  </li>
);

const SidePanel = () => (
  <aside className="flex w-[314px] shrink-0 flex-col border-r border-[#b0b0b0]">
    <div className="flex h-[49px] shrink-0 items-center border-b border-[#b0b0b0] bg-white pl-[14px] pr-[13px] pt-2">
      <FloorPlan />
      <h2 className="ml-1 text-[13px]">Architectural</h2>
      <div className="ml-auto flex gap-1">
        <IconButton label="Materials"><Palette /></IconButton>
        <IconButton label="Tag"><Tag fill="#fff" /></IconButton>
      </div>
    </div>
    <div className="flex min-h-0 flex-1">
      <div className="min-w-0 flex-1 pl-[14px] pr-[9px]">
        <Section title="Floor coverings" icons={[["Export", <Export />]]}>
          <Tiles items={[["Rectangle", <TileRect f="#dceaf6" />], ["Circle", <TileCircle f="#dceaf6" />], ["Polygon", <TilePoly f="#dceaf6" />]]} />
        </Section>
        <hr className="mt-4 border-[#b0b0b0]" />
        <Section title="Add level" icons={[["Settings", <Sliders />], ["Help", <HelpCircle />], ["Export", <Export />]]}>
          <Tiles
            items={[
              ["Rectangle", <TileRect />], ["Circle", <TileCircle />], ["Polygon", <TilePoly />], ["Add corner", <TileV kind="add" />], ["Remove corner", <TileV kind="remove" />],
              ["Arc corner", <TileV kind="arc" />], ["Cut", <TileCut />], ["Move", <TileMove />], ["Fold", <TileFold />],
            ]}
          />
        </Section>
        <hr className="mt-4 border-[#b0b0b0]" />
        <Section title="Level overview" icons={[["Shapes", <Shapes />], ["Help", <HelpCircle />], ["Export", <Export />]]}>
          <div className="ml-[2px] mr-[6px] h-[390px] rounded-t-lg border border-[#e2e2e2] bg-white text-xs">
            <div className="flex h-[37px] items-center border-b border-[#e2e2e2] pl-[6px] pr-[5px]">
              <IconButton label="Show all"><Eye /></IconButton>
              <IconButton label="Lock all" className="ml-2 size-6"><Lock /></IconButton>
              <IconButton label="Colour of all" className="ml-2 size-6"><Swatch /></IconButton>
              <div className="ml-auto flex gap-2">
                <IconButton label="Add level"><LayersAdd /></IconButton>
                <IconButton label="Isolate"><IsolateLayer /></IconButton>
                <IconButton label="Paste"><Paste /></IconButton>
                <IconButton label="Delete"><RedX /></IconButton>
              </div>
            </div>
            <ul className="mx-[2px] mt-[2px]">
              <LevelRow name="Level 2" info={'94.49" (0 objects)'} active />
              <LevelRow name="Level 1" info={'0" (0 objects)'} />
              <LevelRow name="Outside" info="(0 objects)" outside />
            </ul>
          </div>
        </Section>
        <div className="mt-[9px] flex items-center gap-2 pl-[5px] pr-3 text-xs">
          <label htmlFor="level-name" className="w-8">Name</label>
          <input id="level-name" defaultValue="Level 2" className="h-6 min-w-0 flex-1 rounded border border-[#b0b0b0] bg-white px-2" />
        </div>
        <button type="button" className="ml-[45px] mt-2 h-7 whitespace-nowrap rounded border border-[#b0b0b0] bg-white px-[2px] text-xs text-[#8a8a8a]">Save material as default</button>
      </div>
      <div className="mb-[17px] mr-[3px] mt-[11px] w-[2px] shrink-0 bg-[#999]" />
    </div>
    <button type="button" className="flex h-6 shrink-0 items-center gap-[5px] border-t border-[#b0b0b0] bg-white pl-[6px] text-xs"><Chevron d="up" />Preview</button>
  </aside>
);

const Rail = () => (
  <nav aria-label="Tabs" className="w-[52px] shrink-0 overflow-hidden">
    {rail.map((group, i) => (
      <ul key={i} className={i === 0 ? "" : i === 1 ? "border-t border-[#b0b0b0]" : "border-t border-[#dedede]"}>
        {group.map((it) => (
          <li key={it.name}>
            <button type="button" aria-label={it.name} className={`relative flex w-full items-center justify-center ${group.length === 2 ? "h-[33px]" : "h-[34px]"} ${it.active ? "bg-[#cbdfee]" : ""}`}>
              {it.icon}
              {it.dot && <span className="absolute right-[3px] size-[3px] rounded-full bg-[#999]" />}
            </button>
          </li>
        ))}
      </ul>
    ))}
  </nav>
);

const PlanView = () => (
  <section aria-label="2D view" className="relative min-h-0 flex-[481] border-b border-[#b0b0b0] bg-white">
    <svg className="absolute inset-0 size-full" viewBox="0 0 1553 480" preserveAspectRatio="xMidYMin slice" aria-hidden="true">
      <rect x="217.5" y="58.5" width="444" height="273" fill="none" stroke="#000" strokeDasharray="2 1" />
    </svg>
    <Toolbar label="2D tools" groups={tools2d} className="top-1" />
  </section>
);

const SceneView = () => (
  <section aria-label="3D view" className="relative min-h-0 flex-[439] border-b border-[#b0b0b0] bg-white">
    <svg className="absolute inset-0 size-full" viewBox="0 0 1553 439" preserveAspectRatio="xMidYMin slice" aria-hidden="true">
      <defs>
        <radialGradient id="slab" gradientUnits="userSpaceOnUse" cx="720" cy="1400" r="1400">
          <stop offset="0.71" stopColor="#e8e8e8" />
          <stop offset="0.825" stopColor="#d5d5d5" />
          <stop offset="0.98" stopColor="#b9b9b9" />
        </radialGradient>
        <filter id="carpet" x="0" y="0" width="1" height="1" colorInterpolationFilters="sRGB">
          <feTurbulence type="fractalNoise" baseFrequency="0.2 0.8" numOctaves="3" seed="4" result="n" />
          <feColorMatrix in="n" values="0.5 0 0 0 0.52  0.5 0 0 0 0.525  0.5 0 0 0 0.495  0 0 0 0 1" />
          <feComposite in2="SourceGraphic" operator="in" />
        </filter>
      </defs>
      <path d="M415 245H991L1050 439H316z" fill="#c9cac2" filter="url(#carpet)" />
      <path d="M451 245H956L995 401H380z" fill="url(#slab)" />
      <path d="M441 28H961L1042 245H294z" fill="url(#slab)" />
    </svg>
    <Toolbar label="3D tools" groups={tools3d} className="top-[5px]" />
    <span className="absolute right-[6px] top-[5px] size-[2px] bg-[#777]" />
  </section>
);

const viewTabs: [string, string][] = [["Architectural", "w-[93px]"], ["CAD", "w-[51px]"], ["TAGS", "w-[55px]"], ["Colored Tags", "w-[95px]"], ["All", "w-[41px]"]];

const BottomTabs = () => (
  <div className="flex h-[25px] shrink-0 items-center bg-white text-xs">
    <button type="button" className="h-full w-[65px] border-t-[3px] border-[#2d6a9a] bg-[#cbdfee] pb-1">Normal</button>
    {viewTabs.map(([t, w]) => <button type="button" key={t} className={`shrink-0 pb-px text-center ${w}`}>{t}</button>)}
    <button type="button" aria-label="More tabs" className="ml-[2px] flex w-5 flex-col items-center gap-[2px]">
      <span className="size-1 rounded-full bg-[#222]" /><span className="size-1 rounded-full bg-[#222]" /><span className="size-1 rounded-full bg-[#222]" />
    </button>
    <div className="ml-auto flex h-full items-center">
      <VLine />
      <button type="button" className="w-[38px] pb-px">2D</button>
      <button type="button" className="w-[38px] pb-px">3D</button>
      <button type="button" aria-label="Split view" className="flex h-full w-[38px] items-center justify-center border-t-[3px] border-[#2d6a9a] bg-[#cbdfee] pb-[2px]"><SplitView /></button>
      <button type="button" className="w-[50px] pb-px">Paper</button>
    </div>
  </div>
);

export default function App() {
  return (
    <div className="flex h-screen flex-col overflow-hidden bg-[#f7f6f5] font-['Open_Sans','Noto_Sans',sans-serif] text-black">
      <TitleBar />
      <MenuBar />
      <main className="flex min-h-0 flex-1">
        <div className="flex w-[367px] shrink-0 flex-col border-r border-[#b0b0b0]">
          <div className="flex h-[29px] shrink-0 items-center border-b border-[#b0b0b0] pl-[5px] text-xs">
            <div className="relative">
              <select aria-label="Tab filter" className="h-6 w-[191px] appearance-none rounded border border-[#b0b0b0] bg-white pl-[3px]"><option>Show all tabs</option></select>
              <span className="pointer-events-none absolute right-[5px] top-[7px]"><Chevron /></span>
              <svg className="pointer-events-none absolute left-[83px] top-6 z-10" width="14" height="19" viewBox="0 0 14 19" aria-hidden="true">
                <path d="M1 1v14.500l3.500-3 2.500 5 3-1.500-2.500-4.500H12z" fill="#b44fc0" stroke="#3b1240" strokeWidth="1.300" />
              </svg>
            </div>
            <button type="button" className="ml-1 w-7">A</button>
            <button type="button" className="w-7">B</button>
            <button type="button" className="w-[29px]">C</button>
            <IconButton label="Tab settings" className="ml-[1px] size-6"><Gear /></IconButton>
            <IconButton label="Collapse" className="ml-[18px] size-6"><Chevron d="left" /></IconButton>
          </div>
          <div className="flex min-h-0 flex-1">
            <SidePanel />
            <Rail />
          </div>
        </div>
        <div className="flex min-w-0 flex-1 flex-col">
          <PlanView />
          <SceneView />
          <BottomTabs />
          <div className="grid h-[23px] shrink-0 grid-cols-3 border-t border-[#555] text-xs">
            <button type="button" className="border-r border-[#555] bg-[#bdbbde]">Outside</button>
            <button type="button" className="bg-[#bdbbde]">Level 1</button>
            <button type="button" className="border-2 border-black bg-[#bdbbde]">Level 2</button>
          </div>
        </div>
      </main>
    </div>
  );
}
